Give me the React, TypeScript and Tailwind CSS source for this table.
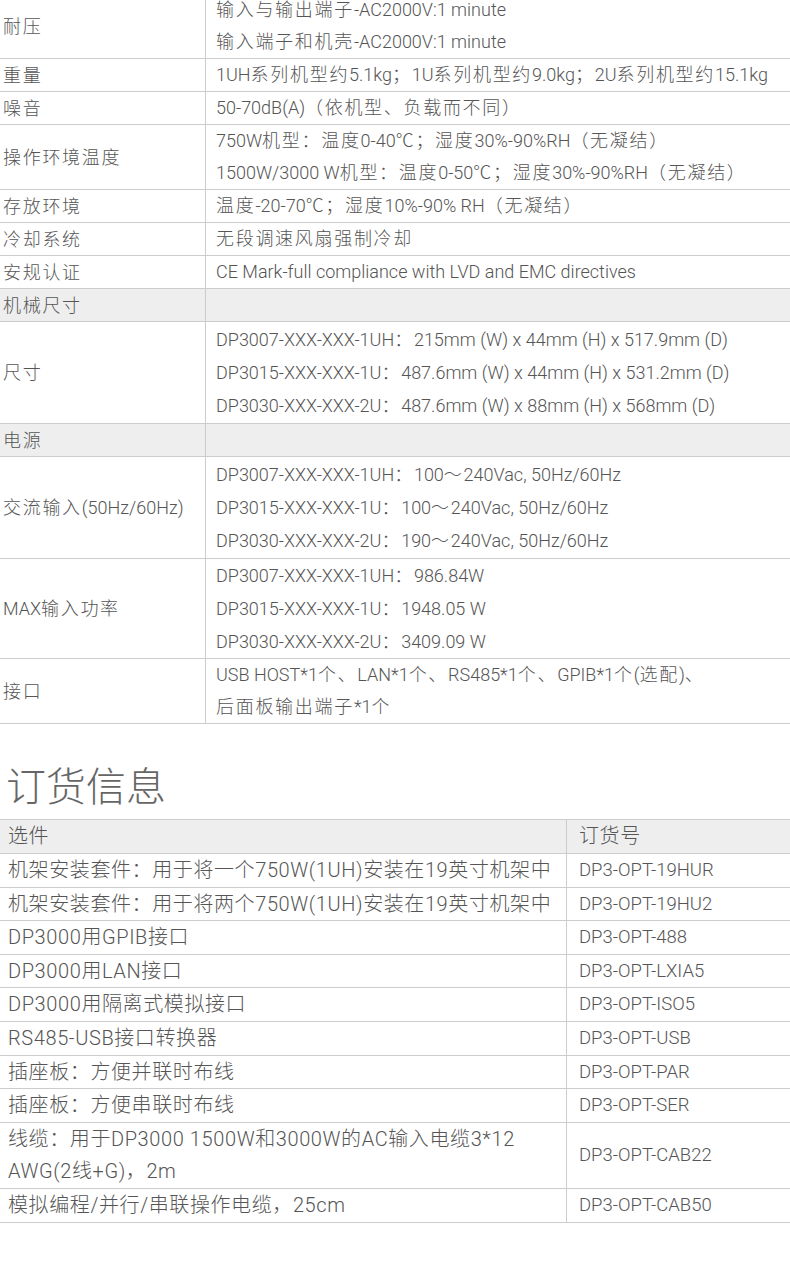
import React from 'react';

type SpecRow = {
  label: string;
  lines: string[];
  section?: boolean;
  lh?: string;
};

const specs: SpecRow[] = [
  { label: '耐压', lines: ['输入与输出端子-AC2000V:1 minute', '输入端子和机壳-AC2000V:1 minute'] },
  { label: '重量', lines: ['1UH系列机型约5.1kg；1U系列机型约9.0kg；2U系列机型约15.1kg'] },
  { label: '噪音', lines: ['50-70dB(A)（依机型、负载而不同）'] },
  {
    label: '操作环境温度',
    lines: ['750W机型：温度0-40℃；湿度30%-90%RH（无凝结）', '1500W/3000 W机型：温度0-50℃；湿度30%-90%RH（无凝结）'],
  },
  { label: '存放环境', lines: ['温度-20-70℃；湿度10%-90% RH（无凝结）'] },
  { label: '冷却系统', lines: ['无段调速风扇强制冷却'] },
  { label: '安规认证', lines: ['CE Mark-full compliance with LVD and EMC directives'] },
  { label: '机械尺寸', lines: [''], section: true },
  {
    label: '尺寸',
    lines: [
      'DP3007-XXX-XXX-1UH：215mm (W) x 44mm (H) x 517.9mm (D)',
      'DP3015-XXX-XXX-1U：487.6mm (W) x 44mm (H) x 531.2mm (D)',
      'DP3030-XXX-XXX-2U：487.6mm (W) x 88mm (H) x 568mm (D)',
    ],
    lh: 'leading-[33px] py-px',
  },
  { label: '电源', lines: [''], section: true },
  {
    label: '交流输入(50Hz/60Hz)',
    lines: [
      'DP3007-XXX-XXX-1UH：100～240Vac, 50Hz/60Hz',
      'DP3015-XXX-XXX-1U：100～240Vac, 50Hz/60Hz',
      'DP3030-XXX-XXX-2U：190～240Vac, 50Hz/60Hz',
    ],
    lh: 'leading-[33px] py-px',
  },
  {
    label: 'MAX输入功率',
    lines: ['DP3007-XXX-XXX-1UH：986.84W', 'DP3015-XXX-XXX-1U：1948.05 W', 'DP3030-XXX-XXX-2U：3409.09 W'],
    lh: 'leading-[33px]',
  },
  { label: '接口', lines: ['USB HOST*1个、LAN*1个、RS485*1个、GPIB*1个(选配)、', '后面板输出端子*1个'] },
];

const orders: { name: string[]; code: string }[] = [
  { name: ['机架安装套件：用于将一个750W(1UH)安装在19英寸机架中'], code: 'DP3-OPT-19HUR' },
  { name: ['机架安装套件：用于将两个750W(1UH)安装在19英寸机架中'], code: 'DP3-OPT-19HU2' },
  { name: ['DP3000用GPIB接口'], code: 'DP3-OPT-488' },
  { name: ['DP3000用LAN接口'], code: 'DP3-OPT-LXIA5' },
  { name: ['DP3000用隔离式模拟接口'], code: 'DP3-OPT-ISO5' },
  { name: ['RS485-USB接口转换器'], code: 'DP3-OPT-USB' },
  { name: ['插座板：方便并联时布线'], code: 'DP3-OPT-PAR' },
  { name: ['插座板：方便串联时布线'], code: 'DP3-OPT-SER' },
  { name: ['线缆：用于DP3000 1500W和3000W的AC输入电缆3*12', 'AWG(2线+G)，2m'], code: 'DP3-OPT-CAB22' },
  { name: ['模拟编程/并行/串联操作电缆，25cm'], code: 'DP3-OPT-CAB50' },
];

// CJK runs get a little extra spacing; the source font sets them wider than Noto does
const CJK = /([\u2100-\u214f\u3000-\u9fff\uff00-\uffef]+)/;

function Mixed({ text }: { text: string }) {
  return (
    <>
      {text.split(CJK).map((part, i) =>
        i % 2 === 1 ? (
          <span key={i} className="tracking-[1.7px]">
            {part}
          </span>
        ) : (
          part
        )
      )}
    </>
  );
}

export default function App() {
  return (
    <div className="w-[790px] h-[1266px] overflow-hidden bg-white text-[#555] font-['Roboto','Noto_Sans_CJK_SC',sans-serif] font-light">
      {/* spec table, scrolled slightly past its first row's top */}
      <div className="-mt-[7px] border-t border-[#ccc]">
        {specs.map((row) => (
          <div
            key={row.label}
            className={`grid grid-cols-[206px_1fr] border-b border-[#ccc] ${row.section ? 'bg-[#eee]' : ''}`}
          >
            <div className="flex items-center border-r border-[#ccc] pl-[3px] text-[18px]">
              <span>
                <Mixed text={row.label} />
              </span>
            </div>
            <div className={`pl-[10px] text-[18px] ${row.lh ?? 'leading-[32px]'}`}>
              {row.lines.map((l, i) => (
                <div key={i} className="whitespace-nowrap min-h-[32px]">
                  <Mixed text={l} />
                </div>
              ))}
            </div>
          </div>
        ))}
      </div>

      <h2 className="mt-[36px] pl-[6px] text-[40px] leading-[56px] font-extralight text-[#666]">订货信息</h2>

      {/* ordering table */}
      <div className="mt-[3px] border-t border-[#ccc] text-[20px] tracking-[0.6px]">
        <div className="grid grid-cols-[567px_1fr] border-b border-[#ccc] bg-[#eee] leading-[33px]">
          <div className="border-r border-[#ccc] pl-[8px]">选件</div>
          <div className="pl-[12px]">订货号</div>
        </div>
        {orders.map((o) => (
          <div key={o.code} className="grid grid-cols-[567px_1fr] border-b border-[#ccc] leading-[32.6px]">
            <div className="border-r border-[#ccc] pl-[8px] whitespace-nowrap">
              {o.name.map((n, i) => (
                <div key={i}>{n}</div>
              ))}
            </div>
            <div className="flex items-center pl-[12px] text-[18.5px] tracking-normal">{o.code}</div>
          </div>
        ))}
      </div>
    </div>
  );
}
